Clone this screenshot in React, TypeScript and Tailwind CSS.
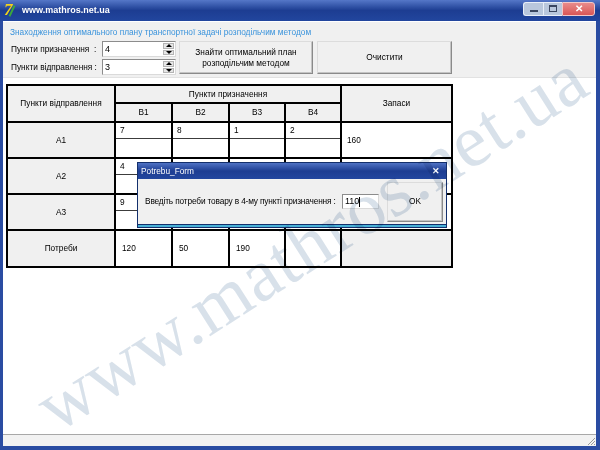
import React from "react"

const ui = "font-['Liberation_Sans',Arial,sans-serif] text-[8.3px] leading-none text-black"

function Spin({ value }: { value: string }) {
  return (
    <div className="w-[74px] h-[16px] bg-white border border-[#8c8c8c] border-r-[#dadada] border-b-[#dadada] flex items-center">
      <span className="flex-1 pl-[2px] text-[9px]">{value}</span>
      <div className="w-[12px] h-full flex flex-col gap-[1px] py-[1px] pr-[1px]">
        <div className="flex-1 bg-[#e6e6e6] border border-[#b4b4b4] flex items-center justify-center">
          <div className="w-0 h-0 border-l-[3px] border-r-[3px] border-b-[3px] border-l-transparent border-r-transparent border-b-black" />
        </div>
        <div className="flex-1 bg-[#e6e6e6] border border-[#b4b4b4] flex items-center justify-center">
          <div className="w-0 h-0 border-l-[3px] border-r-[3px] border-t-[3px] border-l-transparent border-r-transparent border-t-black" />
        </div>
      </div>
    </div>
  )
}

function Btn({ children, className }: { children: React.ReactNode; className: string }) {
  return (
    <div
      className={
        "bg-[#f0f0f0] border border-[#dcdcdc] border-r-[#8a8a8a] border-b-[#8a8a8a] shadow-[inset_-1px_-1px_0_#c4c4c4] flex items-center justify-center text-center leading-[11px] " +
        className
      }
    >
      {children}
    </div>
  )
}

function HeadCell({ children, className = "" }: { children?: React.ReactNode; className?: string }) {
  return <div className={"bg-[#f0f0f0] flex items-center justify-center " + className}>{children}</div>
}

function SplitCell({ value }: { value?: string }) {
  return (
    <div className="bg-white flex flex-col">
      <div className="h-[16px] border-b border-[#3c3c3c] pl-[4px] pt-[3px]">{value}</div>
      <div className="flex-1" />
    </div>
  )
}

const rows = [
  { name: "A1", values: ["7", "8", "1", "2"], stock: "160" },
  { name: "A2", values: ["4", "", "", ""], stock: "" },
  { name: "A3", values: ["9", "", "", ""], stock: "" },
]

export default function App() {
  return (
    <div className={"relative w-[600px] h-[450px] overflow-hidden bg-[#2a4ca2] flex flex-col " + ui}>
      {/* title bar */}
      <div className="h-[21px] shrink-0 bg-gradient-to-b from-[#5577c8] via-[#1d3d92] to-[#22469e] flex items-center pl-[3px] pr-[5px]">
        <div className="w-[16px] h-[16px] relative">
          <span className="absolute left-[1px] top-[-2px] font-['Liberation_Serif',serif] italic font-bold text-[17px] text-[#f3d21a]">7</span>
          <span className="absolute left-[8px] top-[2px] w-[2px] h-[12px] bg-[#3ca83c] rotate-[25deg]" />
        </div>
        <span className="ml-[3px] text-white font-bold text-[9px]">www.mathros.net.ua</span>
        <div className="ml-auto flex items-center mt-[-4px]">
          <div className="w-[20px] h-[14px] bg-[#b9c7dc] border border-[#e8eef8] border-r-0 rounded-l-[3px] flex items-end justify-center pb-[3px]">
            <div className="w-[8px] h-[2px] bg-[#3a4660]" />
          </div>
          <div className="w-[19px] h-[14px] bg-[#b9c7dc] border border-[#e8eef8] border-r-0 flex items-center justify-center">
            <div className="w-[8px] h-[7px] border border-[#3a4660] border-t-2" />
          </div>
          <div className="w-[33px] h-[14px] bg-gradient-to-b from-[#e88b8b] to-[#d95656] border border-[#f2c8c8] rounded-r-[3px] flex items-center justify-center text-white font-bold text-[10px]">
            ✕
          </div>
        </div>
      </div>

      {/* client */}
      <div className="flex-1 ml-[3px] mr-[4px] mb-[4px] bg-white flex flex-col">
        <div className="h-[57px] shrink-0 bg-[#f0f0f0] border-t border-white border-b border-b-[#e2e2e2] pl-[7px] pt-[5px]">
          <div className="h-[10px] text-[#3b94dc] leading-[10px] whitespace-nowrap">
            Знаходження оптимального плану транспортної задачі розподільчим методом
          </div>
          <div className="mt-[4px] flex pl-[1px]">
            <div className="flex flex-col gap-[2px]">
              <div className="flex items-center">
                <span className="w-[91px] whitespace-nowrap">Пункти призначення &nbsp;:</span>
                <Spin value="4" />
              </div>
              <div className="flex items-center">
                <span className="w-[91px] whitespace-nowrap">Пункти відправлення :</span>
                <Spin value="3" />
              </div>
            </div>
            <Btn className="ml-[3px] w-[134px] h-[33px]">
              Знайти оптимальний план
              <br />
              розподільчим методом
            </Btn>
            <Btn className="ml-[4px] w-[135px] h-[33px]">Очистити</Btn>
          </div>
        </div>

        <div className="flex-1 pt-[6px] pl-[3px]">
          <div className="w-max bg-black p-[2px] grid grid-cols-[106px_55px_55px_54px_54px_109px] grid-rows-[16px_17px_34px_34px_34px_35px] gap-[2px]">
            <HeadCell className="row-span-2">Пункти відправлення</HeadCell>
            <HeadCell className="col-span-4">Пункти призначення</HeadCell>
            <HeadCell className="row-span-2">Запаси</HeadCell>
            <HeadCell>B1</HeadCell>
            <HeadCell>B2</HeadCell>
            <HeadCell>B3</HeadCell>
            <HeadCell>B4</HeadCell>
            {rows.map((r) => (
              <React.Fragment key={r.name}>
                <HeadCell>{r.name}</HeadCell>
                {r.values.map((v, i) => (
                  <SplitCell key={i} value={v} />
                ))}
                <div className="bg-white flex items-center pl-[5px]">{r.stock}</div>
              </React.Fragment>
            ))}
            <HeadCell>Потреби</HeadCell>
            <div className="bg-white flex items-center pl-[6px]">120</div>
            <div className="bg-white flex items-center pl-[6px]">50</div>
            <div className="bg-white flex items-center pl-[6px]">190</div>
            <div className="bg-white" />
            <div className="bg-[#f0f0f0]" />
          </div>
        </div>

        {/* status bar */}
        <div className="h-[12px] shrink-0 bg-[#f2f2f2] border-t border-[#a8a8a8] flex justify-end items-end">
          <svg width="10" height="10" viewBox="0 0 10 10">
            <path d="M9 2 L2 9 M9 5 L5 9 M9 8 L8 9" stroke="#9a9a9a" strokeWidth="1" />
          </svg>
        </div>
      </div>

      {/* dialog */}
      <div className="absolute left-[137px] top-[162px] w-[310px] h-[66px] flex flex-col bg-[#f0f0f0] border border-[#132f6c]">
        <div className="h-[16px] shrink-0 bg-gradient-to-b from-[#4f72c4] via-[#1d3d92] to-[#22469e] flex items-center pl-[3px] pr-[6px] text-white">
          <span>Potrebu_Form</span>
          <span className="ml-auto font-bold text-[9px]">✕</span>
        </div>
        <div className="flex-1 flex items-center pl-[7px]">
          <span className="w-[194px] whitespace-nowrap tracking-[-0.15px]">Введіть потреби товару в 4-му пункті призначення :</span>
          <div className="ml-[3px] w-[37px] h-[15px] bg-white border border-[#8c8c8c] border-r-[#dadada] border-b-[#dadada] flex items-center pl-[2px] text-[9px]">
            110<span className="w-[1px] h-[10px] bg-black" />
          </div>
          <Btn className="ml-[8px] w-[56px] h-[40px]">OK</Btn>
        </div>
        <div className="h-[3px] shrink-0 bg-[#49b1d6] border-t border-[#132f6c]" />
      </div>

      {/* watermark */}
      <span className="absolute left-[56px] top-[371px] font-['Liberation_Serif',serif] text-[75px] tracking-[1px] leading-none whitespace-nowrap text-[#d8e1ea] mix-blend-multiply pointer-events-none origin-[0_62px] rotate-[-32.5deg]">
        www.mathros.net.ua
      </span>
    </div>
  )
}
